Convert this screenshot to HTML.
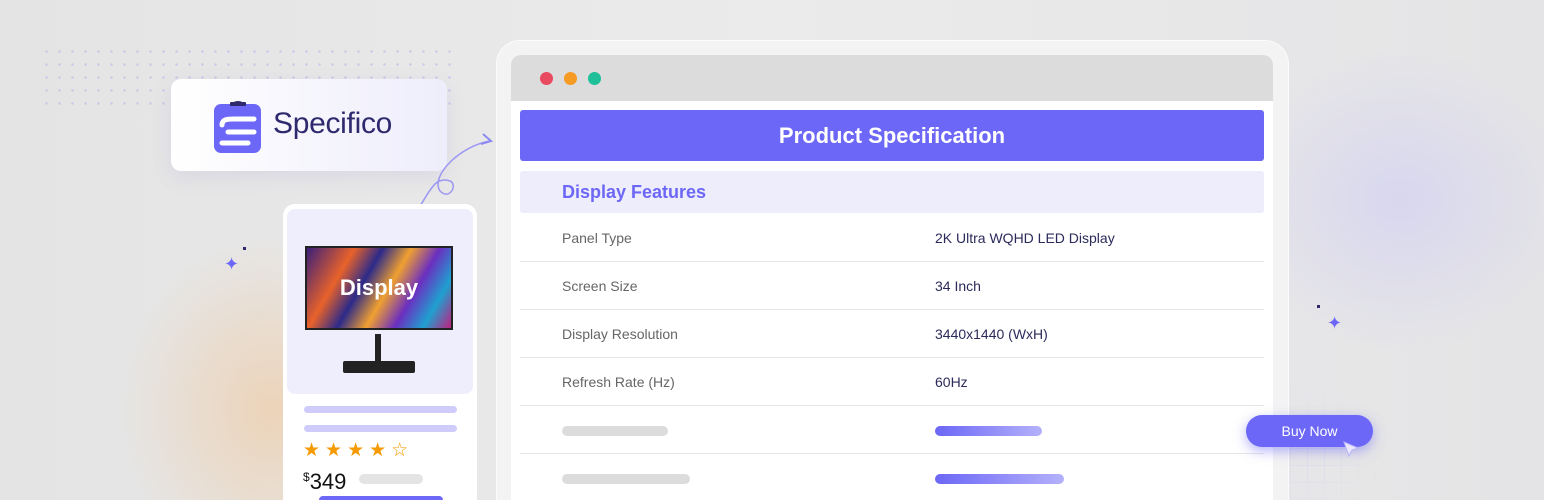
<!DOCTYPE html><html style="width:1544px;height:500px;overflow:hidden"><head><style>
*{margin:0;padding:0;box-sizing:border-box}
body{width:1544px;height:500px;overflow:hidden;position:relative;font-family:"Liberation Sans",sans-serif;background:#e6e6e8}
.bg{position:absolute;inset:0;background:radial-gradient(ellipse 200px 230px at 270px 410px,rgba(238,205,170,.75),transparent 75%),radial-gradient(ellipse 230px 200px at 1400px 200px,rgba(214,212,240,.85),transparent 75%),linear-gradient(90deg,#e4e4e4,#ebebeb 50%,#e4e4e6)}
.dots{position:absolute;left:40px;top:45px;width:420px;height:60px;background-image:radial-gradient(circle,#b6b4ee 1px,transparent 1.5px);background-size:13px 13px;opacity:.6}
.frame{position:absolute;left:496px;top:40px;width:793px;height:460px;border-radius:24px 24px 0 0;background:#f3f3f4;border:1px solid #fbfbfb;border-bottom:0}
.win{position:absolute;left:511px;top:55px;width:762px;height:445px;border-radius:10px 10px 0 0;background:#fff;overflow:hidden}
.tb{height:46px;background:#dcdcdc;position:relative}
.tb i{position:absolute;top:17px;width:13px;height:13px;border-radius:50%}
.title{position:absolute;left:9px;top:55px;width:744px;height:51px;background:#6c67f6;border-radius:3px;color:#fff;font-size:22px;font-weight:bold;text-align:center;line-height:51px}
.feat{position:absolute;left:9px;top:116px;width:744px;height:42px;background:#eeedfc;border-radius:3px;color:#6c67f6;font-size:18px;font-weight:bold;line-height:42px;padding-left:42px}
.row{position:absolute;left:9px;width:744px;height:48px;border-bottom:1.5px solid #e6e6e6;font-size:14px}
.row span{position:absolute;top:16px}
.a{left:42px;color:#666}.b{left:415px;color:#2b2a5a}
.pill{position:absolute;height:10px;border-radius:5px;top:20px}
.logo{position:absolute;left:171px;top:79px;width:276px;height:92px;border-radius:10px;background:linear-gradient(90deg,#fff,#eeedfb);box-shadow:0 6px 20px rgba(120,110,200,.12)}
.logo b{position:absolute;left:102px;top:28px;font-size:30px;color:#2f2a6e;font-weight:normal;letter-spacing:-.3px}
.card{position:absolute;left:283px;top:204px;width:194px;height:296px;border-radius:12px 12px 0 0;background:#fff;overflow:hidden}
.img{position:absolute;left:4px;top:5px;width:186px;height:185px;border-radius:8px;background:#efeefc}
.scr{position:absolute;left:18px;top:37px;width:148px;height:84px;background:linear-gradient(120deg,#3b1f7a,#e8622a 25%,#2c2a8a 40%,#f0a030 55%,#6b2fc0 70%,#1fa0d0 85%,#c02080);border:2px solid #222;color:#fff;font-size:22px;font-weight:bold;text-align:center;line-height:80px}
.buy{position:absolute;left:1246px;top:415px;width:127px;height:32px;border-radius:16px;background:#6c67f6;color:#fff;font-size:14px;text-align:center;line-height:32px;box-shadow:0 4px 12px rgba(108,103,246,.5)}
.grid{position:absolute;left:1273px;top:380px;width:130px;height:120px;background-image:linear-gradient(#d4d2f2 1px,transparent 1px),linear-gradient(90deg,#d4d2f2 1px,transparent 1px);background-size:17px 17px;opacity:.5;-webkit-mask-image:radial-gradient(circle at 30% 60%,#000,transparent 65%)}
</style></head><body>
<div class="bg"></div><div class="dots"></div><div class="grid"></div>
<div class="frame"></div>
<div class="win">
<div class="tb"><i style="left:29px;background:#e84a5f"></i><i style="left:53px;background:#f59a23"></i><i style="left:77px;background:#1fbf9a"></i></div>
<div class="title">Product Specification</div>
<div class="feat">Display Features</div>
<div class="row" style="top:159px"><span class="a">Panel Type</span><span class="b">2K Ultra WQHD LED Display</span></div>
<div class="row" style="top:207px"><span class="a">Screen Size</span><span class="b">34 Inch</span></div>
<div class="row" style="top:255px"><span class="a">Display Resolution</span><span class="b">3440x1440 (WxH)</span></div>
<div class="row" style="top:303px"><span class="a">Refresh Rate (Hz)</span><span class="b">60Hz</span></div>
<div class="row" style="top:351px"><div class="pill" style="left:42px;width:106px;background:#dcdcdc"></div><div class="pill" style="left:415px;width:107px;background:linear-gradient(90deg,#6c67f6,#b4b1fa)"></div></div>
<div class="row" style="top:399px;height:46px;border:0"><div class="pill" style="left:42px;width:128px;background:#dcdcdc"></div><div class="pill" style="left:415px;width:129px;background:linear-gradient(90deg,#6c67f6,#b4b1fa)"></div></div>
</div>
<div class="logo">
<svg style="position:absolute;left:43px;top:19px" width="48" height="56" viewBox="0 0 48 56"><rect x="0" y="6" width="47" height="49" rx="7" fill="#6c67f6"/><path d="M17 8a7 5 0 0 1 14 0z" fill="#2f2a6e"/><rect x="16" y="4" width="16" height="4" rx="1" fill="#2f2a6e"/><path d="M8 27c0-6 6-6 12-6h20M40 34H14M8 45h26" stroke="#fff" stroke-width="5" fill="none" stroke-linecap="round"/></svg>
<b>Specifico</b></div>
<svg style="position:absolute;left:415px;top:128px" width="85" height="80"><path d="M5 78c10-15 15-30 30-25 8 3 0 20-10 10-10-15 20-45 50-50" stroke="#9c98f3" stroke-width="1.5" fill="none"/><path d="M68 6l8 7-10 3" stroke="#8d89f3" stroke-width="2" fill="none"/></svg>
<div class="card"><div class="img"><div class="scr">Display</div>
<div style="position:absolute;left:88px;top:125px;width:6px;height:30px;background:#222"></div>
<div style="position:absolute;left:56px;top:152px;width:72px;height:12px;background:#222;border-radius:2px"></div></div>
<div style="position:absolute;left:21px;top:202px;width:153px;height:7px;border-radius:4px;background:#cfccfb"></div>
<div style="position:absolute;left:21px;top:221px;width:153px;height:7px;border-radius:4px;background:#cfccfb"></div>
<div style="position:absolute;left:20px;top:236px;color:#f59a00;font-size:19px;line-height:22px;letter-spacing:5px">★★★★☆</div>
<div style="position:absolute;left:20px;top:260px;font-size:22px;line-height:26px;color:#111"><span style="font-size:12px;vertical-align:8px">$</span>349</div>
<div style="position:absolute;left:76px;top:270px;width:64px;height:10px;border-radius:5px;background:#e4e4e4"></div>
<div style="position:absolute;left:36px;top:292px;width:124px;height:4px;border-radius:15px 15px 0 0;background:#6c67f6"></div>
</div>
<div style="position:absolute;left:224px;top:254px;color:#6c67f6;font-size:18px;line-height:20px">✦</div>
<div style="position:absolute;left:243px;top:247px;width:3px;height:3px;background:#2f2a6e"></div>
<div style="position:absolute;left:1327px;top:313px;color:#6c67f6;font-size:18px;line-height:20px">✦</div>
<div style="position:absolute;left:1317px;top:305px;width:3px;height:3px;background:#2f2a6e"></div>
<div class="buy">Buy Now</div>
<svg style="position:absolute;left:1342px;top:440px" width="18" height="18"><path d="M2 2l14 6-6 2-3 6z" fill="#ece9ff" stroke="#b8b4f8"/></svg>
</body></html>
